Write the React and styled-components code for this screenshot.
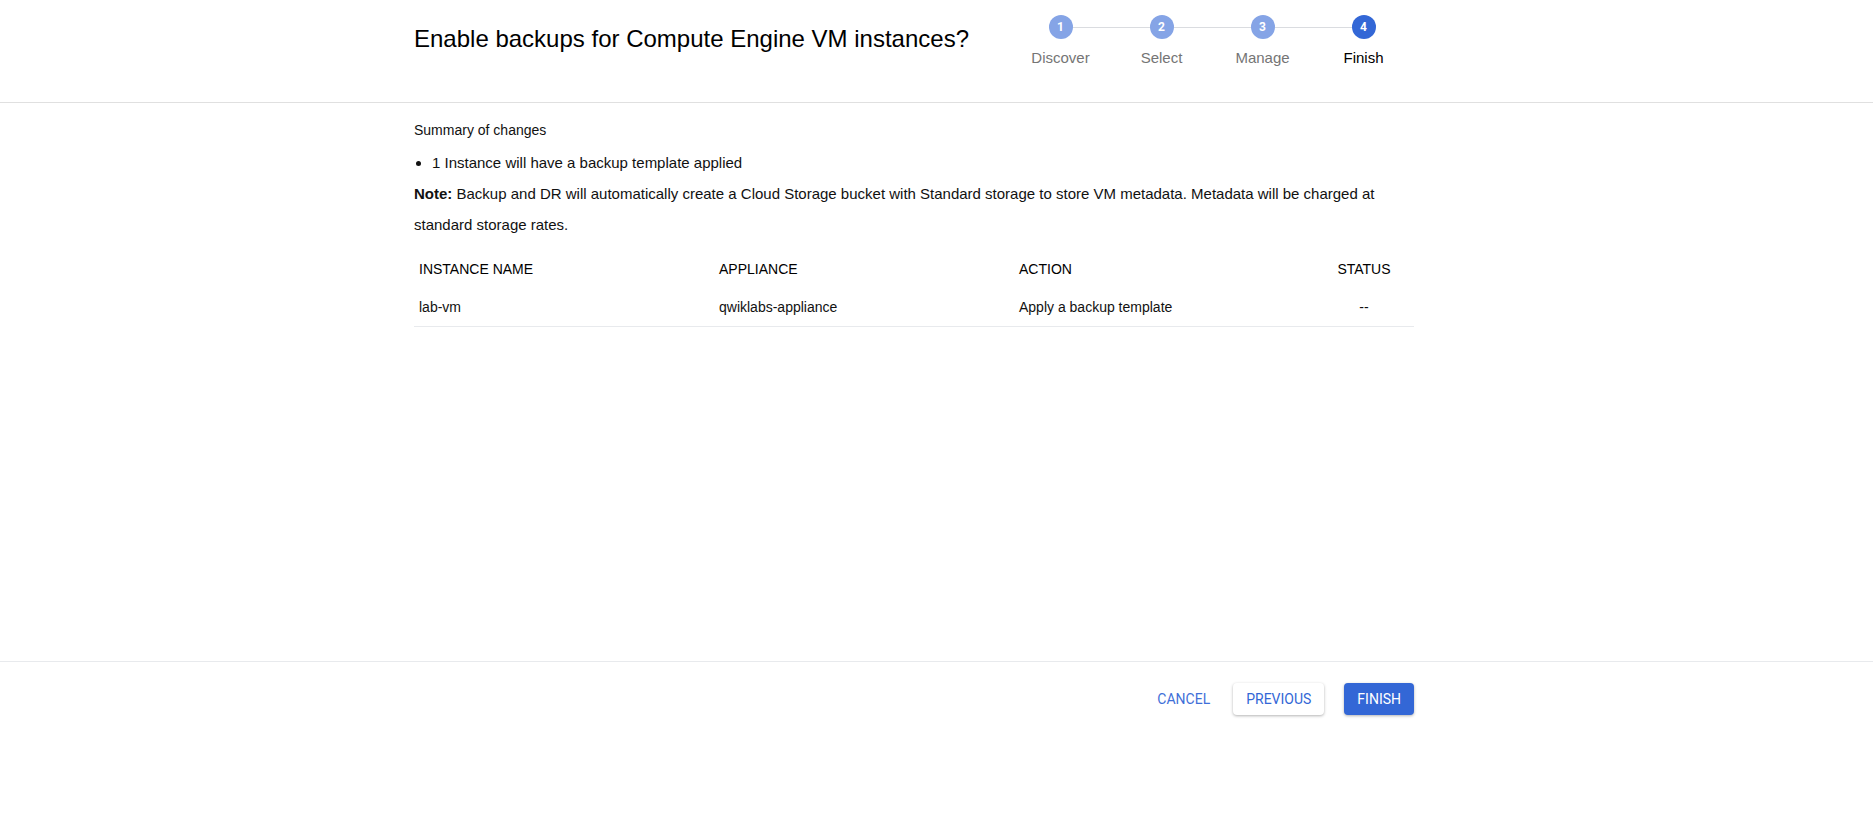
import React from 'react'
import styled, { createGlobalStyle } from 'styled-components'

const GlobalStyle = createGlobalStyle`
  body {
    margin: 0;
    font-family: "Liberation Sans", Arial, sans-serif;
    color: #111111;
    background: #ffffff;
  }
  * { box-sizing: border-box; }
`

const steps = ['Discover', 'Select', 'Manage', 'Finish']

const rows = [
  { name: 'lab-vm', appliance: 'qwiklabs-appliance', action: 'Apply a backup template', status: '--' },
]

export default function App() {
  return (
    <Page>
      <GlobalStyle />
      <Header>
        <Inner className='header_inner'>
          <Title>Enable backups for Compute Engine VM instances?</Title>
          <Stepper>
            {steps.map((label, i) => (
              <Step key={label} $first={i === 0}>
                <StepDot $active={i === steps.length - 1}>{i + 1}</StepDot>
                <StepLabel $active={i === steps.length - 1}>{label}</StepLabel>
              </Step>
            ))}
          </Stepper>
        </Inner>
      </Header>

      <Main>
        <Inner>
          <Summary>Summary of changes</Summary>
          <Bullets>
            <li>1 Instance will have a backup template applied</li>
          </Bullets>
          <Note>
            <b>Note:</b> Backup and DR will automatically create a Cloud Storage bucket with Standard storage to store VM metadata. Metadata will be charged at standard storage rates.
          </Note>
          <Table>
            <colgroup>
              <col style={{ width: 300 }} />
              <col style={{ width: 300 }} />
              <col style={{ width: 300 }} />
              <col style={{ width: 100 }} />
            </colgroup>
            <thead>
              <tr>
                <Th>INSTANCE NAME</Th>
                <Th>APPLIANCE</Th>
                <Th>ACTION</Th>
                <Th $center>STATUS</Th>
              </tr>
            </thead>
            <tbody>
              {rows.map((r) => (
                <tr key={r.name}>
                  <Td>{r.name}</Td>
                  <Td>{r.appliance}</Td>
                  <Td>{r.action}</Td>
                  <Td $center>{r.status}</Td>
                </tr>
              ))}
            </tbody>
          </Table>
        </Inner>
      </Main>

      <Footer>
        <Inner>
          <Actions>
            <TextButton>Cancel</TextButton>
            <OutlineButton>Previous</OutlineButton>
            <PrimaryButton>Finish</PrimaryButton>
          </Actions>
        </Inner>
      </Footer>
    </Page>
  )
}

const Page = styled.div`
  display: flex;
  flex-direction: column;
  min-height: 100vh;
`

const Inner = styled.div`
  width: 1000px;
  margin: 0 auto;
  &.header_inner{
    display: flex;
    justify-content: space-between;
    align-items: flex-start;
    padding-top: 15px;
  }
`

const Header = styled.header`
  height: 103px;
  padding-right: 45px;
  border-bottom: 1px solid #e0e0e0;
`

const Title = styled.h1`
  margin: 8px 0 0;
  font-size: 24px;
  line-height: 32px;
  font-weight: 400;
  color: #000000;
`

const Stepper = styled.ol`
  display: flex;
  margin: 0;
  padding: 0;
  list-style: none;
`

const Step = styled.li`
  position: relative;
  width: 101px;
  display: flex;
  flex-direction: column;
  align-items: center;
  &::before{
    content: '';
    display: ${(p) => (p.$first ? 'none' : 'block')};
    position: absolute;
    top: 12px;
    left: -50%;
    right: 50%;
    height: 1px;
    background: #dadce0;
  }
`

const StepDot = styled.span`
  position: relative;
  z-index: 1;
  width: 24px;
  height: 24px;
  border-radius: 50%;
  display: flex;
  align-items: center;
  justify-content: center;
  background: ${(p) => (p.$active ? '#3367d6' : '#85a4e6')};
  color: #ffffff;
  font-family: Roboto, "Liberation Sans", sans-serif;
  font-size: 12px;
  font-weight: 700;
`

const StepLabel = styled.span`
  margin-top: 10px;
  font-size: 15px;
  line-height: 17px;
  color: ${(p) => (p.$active ? '#000000' : '#757575')};
`

const Main = styled.main`
  flex: 1;
  padding: 17px 45px 0 0;
`

const Summary = styled.p`
  margin: 0;
  font-size: 14px;
  line-height: 20px;
`

const Bullets = styled.ul`
  margin: 7px 0 0;
  padding-left: 18px;
  font-size: 15px;
  line-height: 31px;
`

const Note = styled.p`
  margin: 0;
  font-size: 15px;
  line-height: 31px;
  b{
    font-weight: 700;
  }
`

const Table = styled.table`
  width: 1000px;
  margin-top: 10px;
  border-collapse: collapse;
  table-layout: fixed;
  font-size: 14px;
`

const Th = styled.th`
  height: 38px;
  padding: 0 5px;
  font-weight: 400;
  text-align: ${(p) => (p.$center ? 'center' : 'left')};
  color: #000000;
`

const Td = styled.td`
  height: 38px;
  padding: 0 5px;
  text-align: ${(p) => (p.$center ? 'center' : 'left')};
  border-bottom: 1px solid #e8eaed;
`

const Footer = styled.footer`
  height: 169px;
  padding: 21px 45px 0 0;
  border-top: 1px solid #e8eaed;
`

const Actions = styled.div`
  display: flex;
  justify-content: flex-end;
  align-items: center;
`

const BaseButton = styled.button`
  height: 32px;
  padding: 0 13px;
  border: none;
  border-radius: 4px;
  font-family: Roboto, "Liberation Sans", sans-serif;
  font-size: 14px;
  font-weight: 400;
  text-transform: uppercase;
  cursor: pointer;
`

const TextButton = styled(BaseButton)`
  background: transparent;
  color: #3f6fd8;
  margin-right: 10px;
`

const OutlineButton = styled(BaseButton)`
  background: #ffffff;
  color: #3367d6;
  box-shadow: 0 1px 3px rgba(0, 0, 0, 0.3);
  margin-right: 20px;
`

const PrimaryButton = styled(BaseButton)`
  background: #3367d6;
  color: #ffffff;
  box-shadow: 0 1px 3px rgba(0, 0, 0, 0.3);
`
